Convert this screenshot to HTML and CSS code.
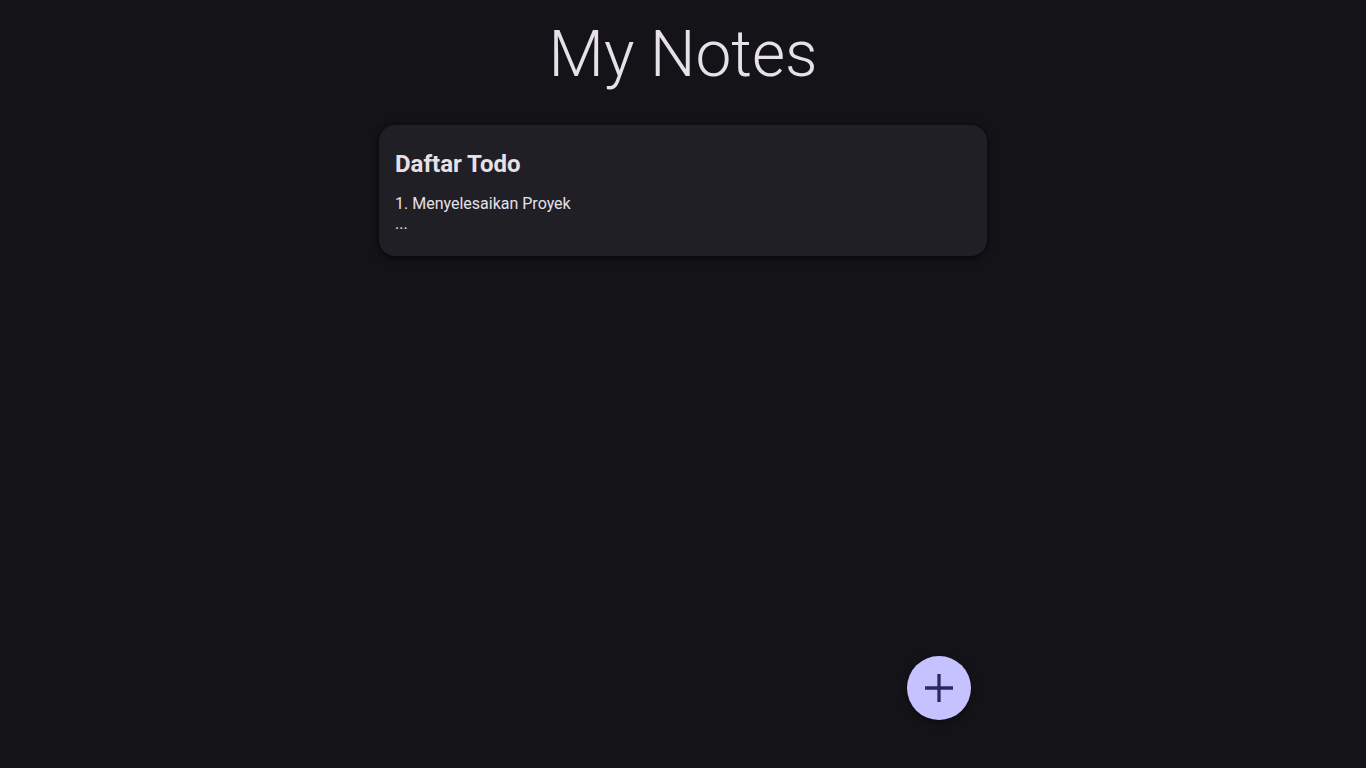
FILE: index.html
```html
<!DOCTYPE html>
<html lang="id">
<head>
<meta charset="utf-8">
<title>My Notes</title>
<link rel="stylesheet" href="styles.css">
</head>
<body>
<main class="app">
  <h1 class="app-title">My Notes</h1>
  <section class="notes">
    <article class="note-card">
      <h2 class="note-title">Daftar Todo</h2>
      <p class="note-body">1. Menyelesaikan Proyek<br>...</p>
    </article>
  </section>
</main>
<div class="fab-wrap">
  <button class="fab" aria-label="Tambah catatan">
    <svg width="32" height="32" viewBox="0 0 32 32" aria-hidden="true">
      <path d="M16 2v28M2 16h28" stroke="#2b2a5e" stroke-width="3.3" fill="none"/>
    </svg>
  </button>
</div>
</body>
</html>
```

FILE: styles.css
```css
* { box-sizing: border-box; }
html, body {
  margin: 0;
  padding: 0;
  background: #141318;
  color: #e6e1e9;
  font-family: Roboto, "Noto Sans", sans-serif;
  min-height: 100vh;
}
.app {
  display: flex;
  flex-direction: column;
  align-items: center;
  padding-top: 17px;
}
.app-title {
  margin: 0;
  font-size: 64px;
  font-weight: 300;
  line-height: 75px;
  color: #e6e1e9;
}
.notes {
  width: 608px;
  margin-top: 33px;
  display: flex;
  flex-direction: column;
  gap: 16px;
}
.note-card {
  background: #211f26;
  border-radius: 16px;
  padding: 23px 16px 22px;
  box-shadow: 0 1px 4px rgba(0,0,0,0.55), 0 2px 8px rgba(0,0,0,0.3);
}
.note-title {
  margin: 0 0 14px;
  font-size: 24px;
  font-weight: 700;
  line-height: 32px;
  color: #e6e1e9;
}
.note-body {
  margin: 0;
  font-size: 16px;
  line-height: 20px;
  color: #e6e1e9;
}
.fab-wrap {
  position: fixed;
  left: 50%;
  bottom: 48px;
  width: 608px;
  margin-left: -304px;
  display: flex;
  justify-content: flex-end;
  padding-right: 16px;
  pointer-events: none;
}
.fab {
  pointer-events: auto;
  width: 64px;
  height: 64px;
  border-radius: 50%;
  border: none;
  background: #c6c2ff;
  display: flex;
  align-items: center;
  justify-content: center;
  padding: 0;
  cursor: pointer;
  box-shadow: 0 2px 6px rgba(0,0,0,0.5);
}
```
